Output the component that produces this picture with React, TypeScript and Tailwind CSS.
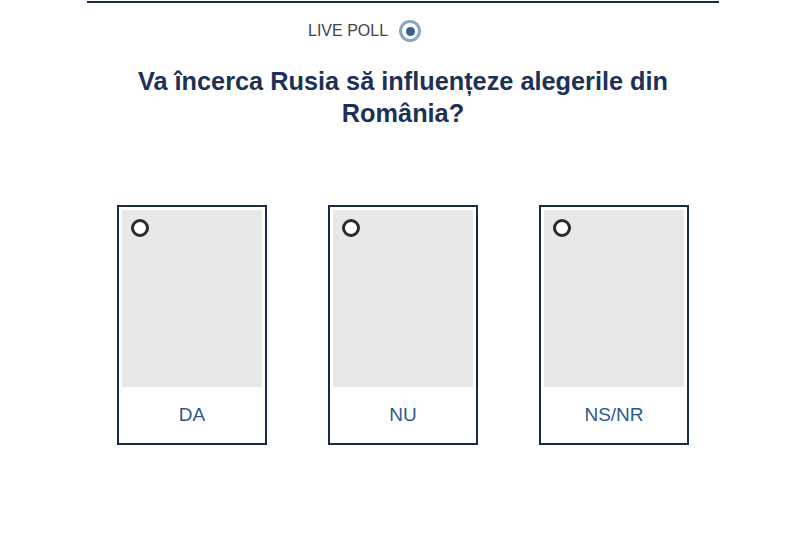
const options = ['DA', 'NU', 'NS/NR'];

export default function App() {
  return (
    <div className="min-h-[546px] w-[800px] bg-white font-['Liberation_Sans',Arial,sans-serif]">
      <div className="ml-[87px] w-[632px]">
        <div className="h-[2px] mt-px bg-[#1b2a47]" />
        <div className="mt-[17px] flex items-center gap-[11px] pl-[221px]">
          <span className="text-[16px] leading-[20px] text-[#444]">LIVE POLL</span>
          <span className="grid h-[22px] w-[22px] place-items-center rounded-full border-[3px] border-[#8ea3c0] bg-white">
            <span className="h-[9px] w-[9px] rounded-full bg-[#34609a]" />
          </span>
        </div>
        <h1 className="mx-auto mt-[23px] w-[580px] text-center text-[25.3px] font-bold leading-[32px] text-[#1d3156]">
          Va încerca Rusia să influențeze alegerile din România?
        </h1>
        <div className="mt-[76px] flex justify-center gap-[61px]">
          {options.map((o) => (
            <div
              key={o}
              className="flex h-[240px] w-[150px] flex-col border-2 border-[#1b2a47] bg-white p-[3px]"
            >
              <div className="h-[177px] bg-[#e8e8e8] pl-[9px] pt-[9px]">
                <span className="block h-[18px] w-[18px] rounded-full border-[3px] border-[#2b2b2b] bg-white" />
              </div>
              <div className="flex flex-1 items-center justify-center pt-[4px] text-[19px] text-[#2d5a8a]">
                {o}
              </div>
            </div>
          ))}
        </div>
      </div>
    </div>
  );
}
